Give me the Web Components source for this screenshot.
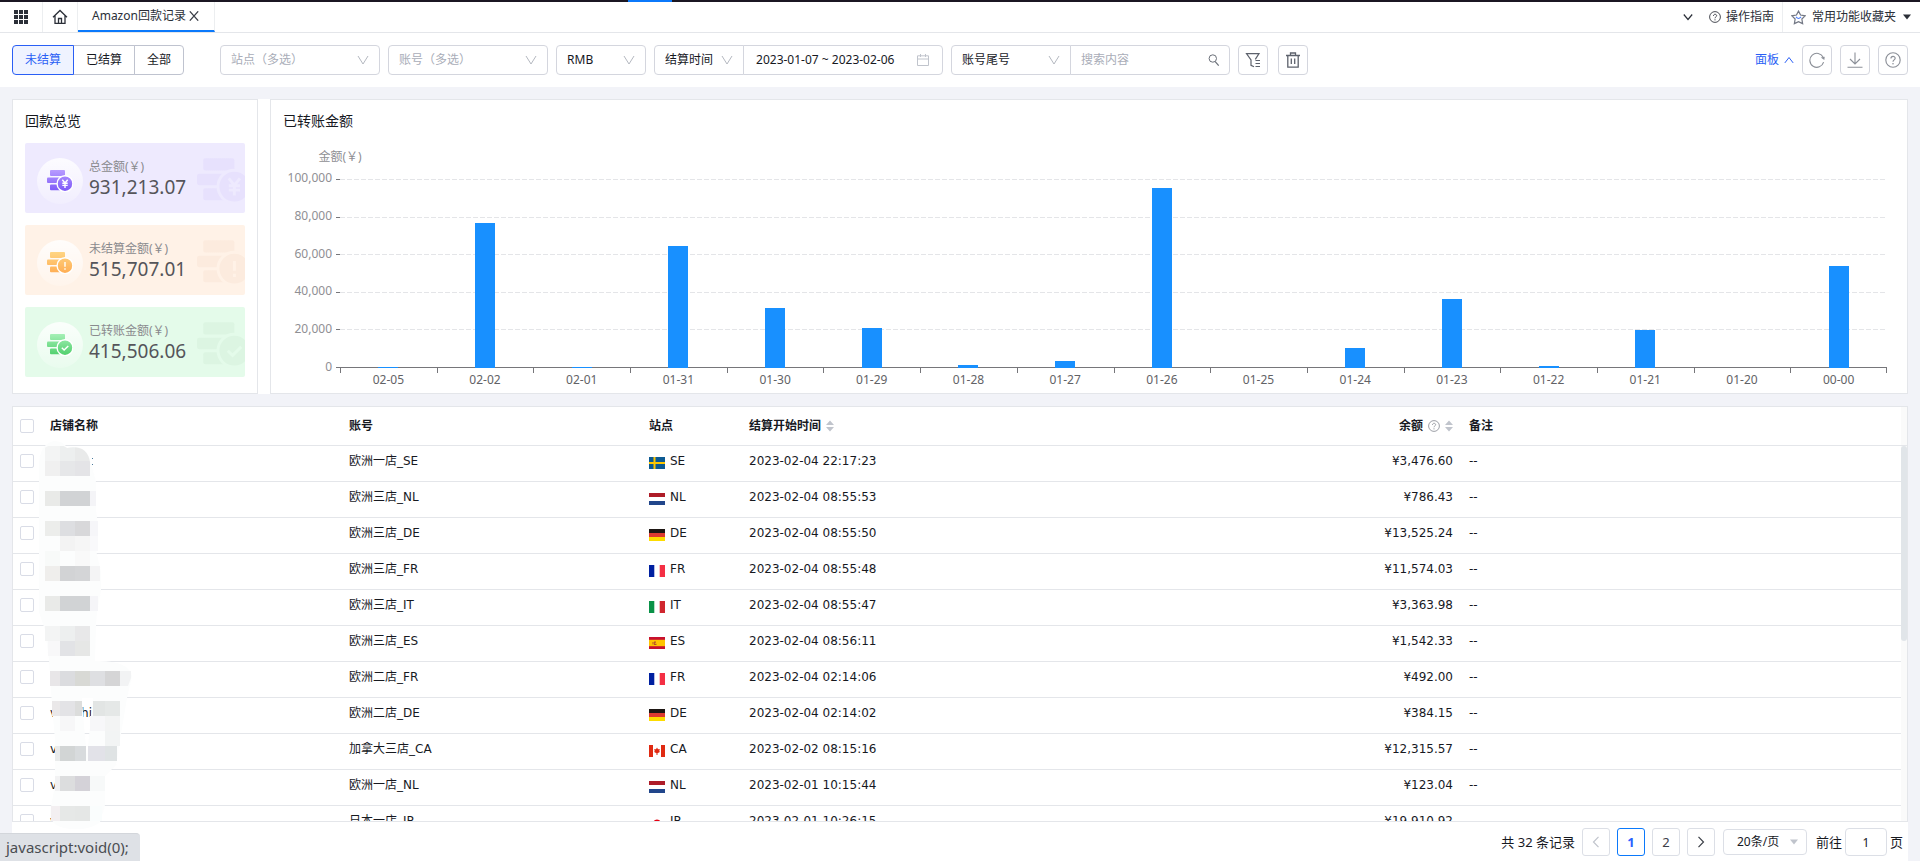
<!DOCTYPE html>
<html lang="zh-CN">
<head>
<meta charset="utf-8">
<title>Amazon回款记录</title>
<style>
html, body { margin: 0; height: 100%; }
body { font: 12px/20px "Noto Sans", "Noto Sans CJK SC", sans-serif; color: #17191f; background: #f2f3f8; }
</style>
</head>
<body>
<payout-app></payout-app>

<script>
const ICONS = {
  apps: ['0 0 14 14', '<g fill="#2b2f38"><path d="M0 0h4v4H0zM5 0h4v4H5zM10 0h4v4h-4zM0 5h4v4H0zM5 5h4v4H5zM10 5h4v4h-4zM0 10h4v4H0zM5 10h4v4H5zM10 10h4v4h-4z"/></g>'],
  home: ['0 0 16 16', '<path d="M1 8.3 8 1.5l7 6.8M3 6.8V14.400h10V6.800M6.500 14.400V9.500h3v4.900" fill="none" stroke="#2b2f38" stroke-width="1.300"/>'],
  close: ['0 0 10 10', '<path d="m.8.3 8.400 9.400M9.200.3.8 9.700" stroke="#3a3e47" stroke-width="1.200" fill="none"/>'],
  down: ['0 0 12 12', '<path d="m1 2 5 8 5-8" stroke="currentColor" fill="none"/>'],
  downsm: ['0 0 10 10', '<path d="m.8 2.500 4.200 5 4.200-5" stroke="currentColor" stroke-width="1.200" fill="none"/>'],
  up: ['0 0 12 12', '<path d="m1 9.500 5-6.500 5 6.500" stroke="currentColor" stroke-width="1.200" fill="none"/>'],
  left: ['0 0 10 12', '<path d="M7.500.8 2.500 6l5 5.200" stroke="currentColor" stroke-width="1.200" fill="none"/>'],
  right: ['0 0 10 12', '<path d="m2.500.8 5 5.200-5 5.200" stroke="currentColor" stroke-width="1.200" fill="none"/>'],
  caret: ['0 0 8 8', '<path d="M0 1.500h8L4 6.500z" fill="currentColor"/>'],
  star: ['0 0 16 16', '<path d="m8 1.200 2.200 4.200 4.800.8-3.400 3.400.8 4.900L8 12.400l-4.400 2.100.8-4.900L1 6.200l4.800-.8z" fill="none" stroke="#737885" stroke-width="1.300"/><path d="M5.300 7.300Q8 10.600 10.700 7.300" fill="none" stroke="#4a7dff" stroke-width="1.100"/>'],
  help: ['0 0 14 14', '<g fill="none" stroke="currentColor"><circle cx="7" cy="7" r="6.300"/><path d="M5.200 5.700C5.200 3.200 8.900 3.300 8.900 5.500 8.900 6.900 7 6.900 7 8.500"/></g><circle cx="7" cy="10.300" r=".7" fill="currentColor"/>'],
  calendar: ['0 0 12 12', '<path d="M.5 1.800h11v9.700H.5zM.5 5h11M3.500 0v3M8.500 0v3" fill="none" stroke="#c0c4cc"/>'],
  search: ['0 0 12 12', '<path d="m7.200 7.600 3.500 4" stroke="#6b7079" stroke-width="1.200"/><circle cx="4.800" cy="4.500" r="3.700" fill="none" stroke="#6b7079"/>'],
  filter: ['0 0 16 16', '<path d="M10.300 7.400 14 1.600H1.500L6 8v5.300l3 1.500M10.500 8.500H15M10.500 11.500H15M10.500 14.500H15" fill="none" stroke="#5d626c" stroke-width="1.200"/>'],
  trash: ['0 0 16 16', '<path d="M1 3.500h14M5.500 3.500v-2.500h5v2.500M2.800 3.500v11.700h10.400V3.500M6.300 6.500v5.500M9.700 6.500v5.500" fill="none" stroke="#5d626c" stroke-width="1.300"/>'],
  refresh: ['0 0 16 16', '<path d="M14.200 5.300A7 7 0 1 0 14.600 10.200" fill="none" stroke="#8c9098" stroke-width="1.100"/><path d="m11.800 5.600 3.900-.9-.4 3.300z" fill="#8c9098"/>'],
  download: ['0 0 16 16', '<path d="M8 .5v11.500M3 7l5 5 5-5M.5 15.200h15" fill="none" stroke="#8c9098" stroke-width="1.100"/>'],
  sort: ['0 0 8 12', '<path d="M0 5h8L4 .5zM0 7h8L4 11.500z" fill="#c0c4cc"/>']
};
const SYMBOLS = {
  yen: 'M14.800 9.500l2.700 3.300 2.700-3.300M14.800 13.100h5.400M14.800 15.200h5.400M17.500 12.800v5',
  alert: 'M17.500 9.800v4.700M17.500 16v1.500',
  check: 'M14.300 13.600l2.300 2.200 4.200-4.100'
};
const FLAGS = {
  SE: '<path fill="#0d5a92" d="M0 0h16v12H0z"/><path d="M5.500 0v12M0 6h16" stroke="#ffc800" stroke-width="2"/>',
  NL: '<path fill="#fff" d="M0 0h16v12H0z"/><path fill="#ae1c28" d="M0 0h16v4H0z"/><path fill="#21468b" d="M0 8h16v4H0z"/>',
  DE: '<path fill="#1d1613" d="M0 0h16v4H0z"/><path fill="#dd3a30" d="M0 4h16v4H0z"/><path fill="#fddc00" d="M0 8h16v4H0z"/>',
  FR: '<path fill="#fff" d="M0 0h16v12H0z"/><path fill="#0020a0" d="M0 0h5.300v12H0z"/><path fill="#f42f44" d="M10.700 0H16v12h-5.300z"/>',
  IT: '<path fill="#fff" d="M0 0h16v12H0z"/><path fill="#0a9248" d="M0 0h5.300v12H0z"/><path fill="#d0262e" d="M10.700 0H16v12h-5.300z"/>',
  ES: '<path fill="#c8102e" d="M0 0h16v12H0z"/><path fill="#ffc400" d="M0 2.800h16v6.400H0z"/><path fill="#b5502a" d="M3.500 5h1v2.500h-1zM5 4.500h2v1.200H5.800v1h1.700V8H5z"/>',
  CA: '<path fill="#fff" d="M0 0h16v12H0z"/><path fill="#e02a12" d="M0 0h4v12H0zM12 0h4v12h-4z"/><path fill="#e02a12" d="m8 2.500 1 1.700 1.800-.2-.5 2 .6.900L8.500 8.300V10h-1V8.300L5.100 6.900l.6-.9-.5-2 1.800.2z"/>',
  JP: '<path fill="#fff" d="M0 0h16v12H0z"/><circle cx="8" cy="6" r="3.600" fill="#e60012"/>'
};

/* Shared base: puts the subclass's markup and styles into an open shadow root. */
class Base extends HTMLElement {
  connectedCallback() {
    if (this.shadowRoot) return;
    const t = document.createElement('template');
    t.innerHTML = `<style>*{box-sizing:border-box}button,input,select{font:inherit;color:inherit;margin:0}${this.css()}</style>${this.html()}`;
    this.attachShadow({ mode: 'open' }).append(t.content.cloneNode(true));
  }
}

class UiIcon extends Base {
  css() { return `:host{display:inline-block;flex:none;width:var(--s,12px);height:var(--h,var(--s,12px))}svg{display:block;width:100%;height:100%}`; }
  html() { const [box, body] = ICONS[this.getAttribute('name')]; return `<svg viewBox="${box}" aria-hidden="true">${body}</svg>`; }
}

class TabStrip extends Base {
  css() { return `
    :host{display:block;background:#fff}
    .edge{height:2px;background:linear-gradient(90deg,#1b1723 0 32.700%,#0b79fb 32.700% 35%,#1b1723 35%)}
    nav{display:flex;align-items:stretch;height:31px;border-bottom:1px solid #e4e6ea;white-space:nowrap}
    button,a{display:flex;align-items:center;border:0;background:none;padding:0;text-decoration:none;color:#2b2f38}
    .sq{justify-content:center;width:43px;border-right:1px solid #eceef0}
    .home{width:35px}
    .tab{display:flex;gap:3px;padding:0 15px 0 14px;border-bottom:2px solid #0b79fb;border-right:1px solid #eceef0}
    .space{flex:1}
    .guide{gap:5px;padding:0 8px 0 16px;border-right:1px solid #eceef0}
    .fav{gap:6px;padding:0 9px 0 8px}
    .fav span{margin-right:1px}`; }
  html() { return `
    <div class="edge"></div>
    <nav>
      <button class="sq" aria-label="应用"><ui-icon name="apps" style="--s:14px"></ui-icon></button>
      <a class="sq home" href="#" aria-label="首页"><ui-icon name="home" style="--s:16px"></ui-icon></a>
      <div class="tab"><a href="#">Amazon回款记录</a><button aria-label="关闭"><ui-icon name="close" style="--s:10px"></ui-icon></button></div>
      <span class="space"></span>
      <button aria-label="更多"><ui-icon name="downsm" style="--s:10px"></ui-icon></button>
      <a class="guide" href="#"><ui-icon name="help" style="--s:12px"></ui-icon>操作指南</a>
      <button class="fav"><ui-icon name="star" style="--s:15px"></ui-icon><span>常用功能收藏夹</span><ui-icon name="caret" style="--s:8px"></ui-icon></button>
    </nav>`; }
}

/* Drop-down: width from --w, options come from the "label" attribute. */
class UiSelect extends Base {
  css() { return `
    :host{display:flex;position:relative;width:var(--w);height:30px}
    select{appearance:none;width:100%;height:100%;border:1px solid #d4d6de;border-radius:var(--r,4px);background:#fff;padding:0 24px 0 10px;outline:0}
    :host([muted]) select{color:#a9adb8}
    ui-icon{position:absolute;right:11px;top:9px;color:#b4b8c0;pointer-events:none}`; }
  html() { const l = this.getAttribute('label'); return `<select aria-label="${l}"><option>${l}</option></select><ui-icon name="down"></ui-icon>`; }
}

class FilterBar extends Base {
  css() { return `
    :host{display:flex;align-items:center;gap:8px;height:54px;padding:0 12px;background:#fff}
    .seg{display:flex;margin-right:28px}
    .seg button{height:30px;padding:0 12px;border:1px solid #bfc3cf;background:#fff;margin-left:-1px}
    .seg button:first-child{margin:0;border-radius:4px 0 0 4px}
    .seg button:last-child{border-radius:0 4px 4px 0}
    .seg .on{position:relative;color:#2a5ff5;border-color:#2a5ff5;background:#eff3ff}
    .group{display:flex}
    .group ui-select{--r:4px 0 0 4px}
    .field{display:flex;align-items:center;height:30px;border:1px solid #d4d6de;border-radius:0 4px 4px 0;margin-left:-1px;padding:0 9px 0 10px;width:160px}
    .date{width:200px;padding:0 13px 0 12px}
    input{flex:1;min-width:0;border:0;outline:0;background:none;padding:0}
    input::placeholder{color:#a9adb8}
    .sq{display:flex;align-items:center;justify-content:center;width:30px;height:30px;padding:0;border:1px solid #d4d6de;border-radius:4px;background:#fff;color:#8c9098}
    .del{margin-left:2px}
    .space{flex:1}
    .panel{display:flex;align-items:center;gap:5px;color:#2a5ff5;text-decoration:none}`; }
  html() { return `
    <div class="seg"><button class="on">未结算</button><button>已结算</button><button>全部</button></div>
    <ui-select label="站点（多选）" muted style="--w:160px"></ui-select>
    <ui-select label="账号（多选）" muted style="--w:160px"></ui-select>
    <ui-select label="RMB" style="--w:90px"></ui-select>
    <div class="group"><ui-select label="结算时间" style="--w:90px"></ui-select><label class="field date"><input aria-label="日期范围" value="2023-01-07 ~ 2023-02-06"><ui-icon name="calendar"></ui-icon></label></div>
    <div class="group"><ui-select label="账号尾号" style="--w:120px"></ui-select><label class="field"><input aria-label="搜索" placeholder="搜索内容"><ui-icon name="search"></ui-icon></label></div>
    <button class="sq" aria-label="筛选"><ui-icon name="filter" style="--s:16px"></ui-icon></button>
    <button class="sq del" aria-label="清除"><ui-icon name="trash" style="--s:16px"></ui-icon></button>
    <span class="space"></span>
    <a class="panel" href="#">面板<ui-icon name="up" style="--s:10px"></ui-icon></a>
    <button class="sq" aria-label="刷新"><ui-icon name="refresh" style="--s:16px"></ui-icon></button>
    <button class="sq" aria-label="下载"><ui-icon name="download" style="--s:16px"></ui-icon></button>
    <button class="sq" aria-label="帮助"><ui-icon name="help" style="--s:16px"></ui-icon></button>`; }
}

class UiPanel extends Base {
  css() { return `
    :host{display:flex;flex-direction:column;min-width:0;border:1px solid #e4e6ea;background:#fff;padding:12px;box-sizing:border-box}
    h2{margin:0 0 13px;font-size:14px;line-height:18px;font-weight:400}`; }
  html() { return `<h2>${this.getAttribute('heading')}</h2><slot></slot>`; }
}

class StatCard extends Base {
  css() { return `
    :host{display:flex;align-items:center;position:relative;overflow:hidden;height:70px;border-radius:2px;background:var(--bg);padding-left:12px;gap:6px;box-sizing:border-box}
    .disc{display:flex;align-items:center;justify-content:center;width:46px;height:46px;border-radius:50%;margin-top:6px;background:linear-gradient(#ffffffd9,#ffffff33)}
    .disc svg{width:26px;height:22px}
    .mark{position:absolute;left:172px;top:15px;width:54px;height:46px}
    .text{padding-bottom:2px}
    .label{color:#8a8a8e}
    .value{font-size:19px;line-height:20px;color:#55555a}
    div p{margin:0}`; }
  coins(fill, ring, sym, cls) { return `<svg class="${cls}" viewBox="0 0 26 22" aria-hidden="true"><defs><linearGradient id="g${cls}" x1="0" y1="0" x2="0" y2="22" gradientUnits="userSpaceOnUse"><stop stop-color="${fill[0]}"/><stop offset="1" stop-color="${fill[1]}"/></linearGradient></defs><g fill="url(#g${cls})"><rect x="3" width="15" height="6" rx="1"/><rect y="7.500" width="16" height="5.500" rx="1"/><rect x="3" y="14.500" width="11" height="5.800" rx="1"/><circle cx="18" cy="13.700" r="7.900" stroke="${ring}" stroke-width="1.400"/></g><path transform="translate(.5 .2)" d="${SYMBOLS[sym]}" fill="none" stroke="${ring}" stroke-width="1.400"/></svg>`; }
  html() {
    const a = n => this.getAttribute(n), mark = a('mark');
    return `<span class="disc">${this.coins([a('from'), a('to')], '#fff', a('symbol'), 'ic')}</span>
    <div class="text"><p class="label"><slot name="label"></slot></p><p class="value"><slot></slot></p></div>
    ${this.coins([mark, mark], a('bg'), a('symbol'), 'mark')}`; }
}

class BarChart extends Base {
  css() { return `
    :host{display:flex;flex-direction:column;flex:1;margin:4px 8px 0 0;color:#8f8f94}
    .unit{width:114px;text-align:center;margin-bottom:12px}
    .body{display:grid;grid-template-columns:49px 8px 1fr;grid-template-rows:1fr 25px;flex:1}
    .y,.ticks,.grid{display:flex;flex-direction:column;justify-content:space-between}
    .y{margin:-1px 0 1px}
    .y span{height:0;line-height:0;text-align:right}
    .ticks i{height:1px;background:#76767a;margin-left:4px}
    .plot{display:grid}
    .grid,.bars{grid-area:1/1}
    .grid i{height:1px;background:repeating-linear-gradient(90deg,#e4e5e8 0 5px,transparent 5px 7px)}
    .grid i:last-child{background:#76767a}
    .bars{display:flex}
    .bars div{flex:1;display:flex;align-items:flex-end;justify-content:center}
    .bars b{width:20px;background:#1890ff}
    .x{grid-column:3;display:flex;color:#626266}
    .x span{flex:1;text-align:center;padding-top:2px;background:linear-gradient(#76767a,#76767a) 0 0/1px 5px no-repeat}
    .x span:last-child{background:linear-gradient(#76767a,#76767a) 0 0/1px 5px no-repeat,linear-gradient(#76767a,#76767a) 100% 0/1px 5px no-repeat}`; }
  html() {
    const data = [['02-05', 600], ['02-02', 76700], ['02-01', 450], ['01-31', 64300], ['01-30', 31800], ['01-29', 21000], ['01-28', 1500], ['01-27', 3900], ['01-26', 95100], ['01-25', 0], ['01-24', 10800], ['01-23', 36700], ['01-22', 1000], ['01-21', 20100], ['01-20', 0], ['00-00', 54200]];
    const ticks = ['100,000', '80,000', '60,000', '40,000', '20,000', '0'];
    return `<div class="unit">金额(￥)</div><div class="body">
      <div class="y">${ticks.map(t => `<span>${t}</span>`).join('')}</div>
      <div class="ticks">${ticks.map(() => '<i></i>').join('')}</div>
      <div class="plot"><div class="grid">${ticks.map(() => '<i></i>').join('')}</div>
      <div class="bars">${data.map(d => `<div><b style="height:${d[1] / 1000}%"></b></div>`).join('')}</div></div>
      <div class="x">${data.map(d => `<span>${d[0]}</span>`).join('')}</div></div>`; }
}

/* Pixelated cover over the shop names. Each entry: y, then [x, width, colour]... */
const MOSAIC = [
  [491, [45, 15, '#e9eae8'], [60, 30, '#d1d3d5'], [90, 6, '#f4f4f7']],
  [521, [45, 15, '#ecedeb'], [60, 15, '#dddee1'], [75, 15, '#d8d8da'], [90, 8, '#f6f6f9']],
  [536, [60, 15, '#f3f3f3'], [75, 15, '#f6f6f6'], [90, 8, '#f9f9fb']],
  [551, [45, 15, '#f8faf9'], [75, 15, '#f9f9f9']],
  [566, [45, 15, '#efeeec'], [60, 15, '#d2d3d5'], [75, 15, '#d4d5d7'], [90, 10, '#f4f4f5']],
  [596, [45, 15, '#e9eae8'], [60, 30, '#d1d3d5'], [90, 8, '#f5f5f8']],
  [626, [45, 15, '#f3f4f4'], [60, 15, '#edefef'], [75, 15, '#e8e8e9']],
  [641, [48, 12, '#f8f8f9'], [60, 15, '#e2e3e6'], [75, 15, '#e6e7e6']],
  [671, [50, 10, '#e8e6e8'], [60, 15, '#dbdcdf'], [75, 15, '#d8d9d5'], [90, 15, '#dedfe2'], [105, 15, '#d5d5d6']],
  [701, [52, 8, '#eae8e9'], [60, 15, '#e3e3e6'], [75, 7, '#dcdddc'], [93, 12, '#e2e5e4'], [105, 15, '#e5e8e7']],
  [716, [60, 15, '#f7f7f8'], [90, 15, '#f7f7f9'], [105, 15, '#f3f4f4']],
  [731, [105, 15, '#f2f4f4']],
  [746, [55, 5, '#e9ebeb'], [60, 15, '#d2d5d5'], [75, 11, '#d8dbdd'], [88, 17, '#e2e2e8'], [105, 12, '#dfe3e4']],
  [776, [55, 5, '#f2f2f3'], [60, 15, '#dcddde'], [75, 15, '#d4d2d8'], [90, 15, '#f7f9f9']],
  [806, [51, 9, '#f3eff1'], [60, 15, '#e6e8e7'], [75, 15, '#e5e7e6'], [90, 12, '#fafdfd']]
];

class NameMask extends Base {
  css() { return `:host{display:block;position:absolute;left:22px;top:33px;width:100px;height:390px;pointer-events:none}svg{display:block}`; }
  html() { return `<svg width="100" height="390" viewBox="35 440 100 390" aria-hidden="true">
    <clipPath id="top"><path d="M43 480v-31q12-9 24-1 20-4 23 14v18z"/></clipPath>
    <path fill="#fcfdfd" fill-rule="evenodd" d="M39 470Q38 444 54 441 64 441 67 448 86 442 91 463L96 482V510L98 525 96 550 101 572V590L97 612 96 625 95 661Q128 660 132 676L127 698 120 740 116 765 105 776 105 805 100 822Q92 830 72 829 50 828 50 812L55 785 55 740 52 705 49 660 45 630 39 612zM82 698h11l-3 28-3 30-3-30z"/>
    <g clip-path="url(#top)"><path fill="#f3f4f4" d="M45 446h15v15H45z"/><path fill="#edefef" d="M60 446h15v15H60z"/><path fill="#e9eaea" d="M75 446h15v15H75z"/><path fill="#f0f0f0" d="M45 461h15v15H45z"/><path fill="#e6e7e9" d="M60 461h15v15H60z"/><path fill="#e4e4e7" d="M75 461h15v15H75z"/></g>
    <path fill="#4a7a9c" d="M92 458h1v1h-1zM92 464h1v1h-1z"/>
    <path fill="#f2f3f4" d="M120 671h11v7l-3 8h-8z"/>
    ${MOSAIC.map(([y, ...r]) => r.map(([x, w, c]) => `<rect x="${x}" y="${y}" width="${w}" height="15" fill="${c}"/>`).join('')).join('')}
  </svg>`; }
}

class RecordTable extends Base {
  css() { return `
    :host{display:flex;position:relative;flex:1;min-height:0;border:1px solid #e4e6ea;background:#fff;box-sizing:border-box}
    .view{flex:1;min-width:0;overflow:auto;scrollbar-width:none}
    table{width:100%;table-layout:fixed;border-collapse:separate;border-spacing:0;font-family:"DejaVu Sans","Noto Sans CJK SC",sans-serif}
    th,td{border-bottom:1px solid #e4e6ea;padding:0 8px;text-align:left;line-height:20px;white-space:nowrap}
    th{height:39px;font-weight:700}
    td{height:36px;padding-bottom:5px}
    th:first-child,td:first-child{padding-left:7px;padding-right:0}
    .num{text-align:right}
    .row{display:flex;align-items:center;gap:5px}
    .num .row{justify-content:flex-end}
    .flag{width:16px;height:12px;margin-top:3px}
    input{display:block;appearance:none;width:14px;height:14px;border:1px solid #d9dce6;border-radius:2px;background:#fff}
    .part{padding-left:24px}
    .bar{width:6px;display:flex;flex-direction:column;background:#fafafa}
    .bar i{height:39px;border-bottom:1px solid #e4e6ea}
    .bar div{flex:1}
    .bar b{display:block;height:52%;border-radius:4px;background:#e1e5e9}
    ui-icon{color:#8c9098}`; }
  html() {
    const rows = [
      ['', '欧洲一店_SE', 'SE', '2023-02-04 22:17:23', '¥3,476.60'], ['', '欧洲三店_NL', 'NL', '2023-02-04 08:55:53', '¥786.43'],
      ['', '欧洲三店_DE', 'DE', '2023-02-04 08:55:50', '¥13,525.24'], ['', '欧洲三店_FR', 'FR', '2023-02-04 08:55:48', '¥11,574.03'],
      ['', '欧洲三店_IT', 'IT', '2023-02-04 08:55:47', '¥3,363.98'], ['', '欧洲三店_ES', 'ES', '2023-02-04 08:56:11', '¥1,542.33'],
      ['', '欧洲二店_FR', 'FR', '2023-02-04 02:14:06', '¥492.00'], ['v<span class="part">hin</span>', '欧洲二店_DE', 'DE', '2023-02-04 02:14:02', '¥384.15'],
      ['v', '加拿大三店_CA', 'CA', '2023-02-02 08:15:16', '¥12,315.57'], ['v', '欧洲一店_NL', 'NL', '2023-02-01 10:15:44', '¥123.04'],
      ['v', '日本一店_JP', 'JP', '2023-02-01 10:26:15', '¥19,910.92']];
    return `<div class="view"><table>
      <colgroup><col style="width:29px"><col style="width:299px"><col style="width:300px"><col style="width:100px"><col style="width:360px"><col style="width:360px"><col style="width:440px"></colgroup>
      <thead><tr><th><input type="checkbox" aria-label="全选"></th><th>店铺名称</th><th>账号</th><th>站点</th>
        <th><div class="row">结算开始时间<ui-icon name="sort" style="--s:8px;--h:12px"></ui-icon></div></th>
        <th class="num"><div class="row">余额<ui-icon name="help"></ui-icon><ui-icon name="sort" style="--s:8px;--h:12px"></ui-icon></div></th><th>备注</th></tr></thead>
      <tbody>${rows.map((r, i) => `<tr><td><input type="checkbox" aria-label="选择第${i + 1}行"></td><td>${r[0]}</td><td>${r[1]}</td>
        <td><div class="row"><svg class="flag" viewBox="0 0 16 12" aria-hidden="true">${FLAGS[r[2]]}</svg>${r[2]}</div></td><td>${r[3]}</td><td class="num">${r[4]}</td><td>--</td></tr>`).join('')}</tbody>
    </table></div>
    <div class="bar"><i></i><div><b></b></div></div>
    <name-mask></name-mask>`; }
}

class PageNav extends Base {
  css() { return `
    :host{display:flex;align-items:center;justify-content:flex-end;gap:7px;padding:6px 5px 5px;background:#fff;font-size:13px}
    button{display:flex;align-items:center;justify-content:center;width:28px;height:28px;padding:0;border:1px solid #dcdfe6;border-radius:3px;background:#fff;color:#3c4048}
    .on{border-color:#0b79fb;color:#2a62ff;font-weight:700}
    .off{color:#c0c4cc}
    .size{position:relative;display:flex;margin:0 2px 0 1px;font-size:12px}
    select{appearance:none;width:84px;height:26px;border:1px solid #dcdfe6;border-radius:4px;background:#fff;padding:0 24px 0 13px;outline:0}
    .size ui-icon{position:absolute;right:9px;top:9px;color:#c0c4cc;pointer-events:none}
    label{display:flex;align-items:center;gap:3px}
    input{width:42px;height:28px;border:1px solid #dcdfe6;border-radius:4px;text-align:center;padding:0;font-size:12px}`; }
  html() { return `<span>共 32 条记录</span>
    <button class="off" aria-label="上一页"><ui-icon name="left" style="--s:10px;--h:12px"></ui-icon></button>
    <button class="on">1</button><button>2</button>
    <button aria-label="下一页"><ui-icon name="right" style="--s:10px;--h:12px"></ui-icon></button>
    <span class="size"><select aria-label="每页条数"><option>20条/页</option></select><ui-icon name="caret" style="--s:8px"></ui-icon></span>
    <label>前往<input value="1">页</label>`; }
}

class StatusTip extends Base {
  css() { return `:host{position:fixed;left:0;bottom:0;background:#dee1e6;color:#4a4d52;border-radius:0 4px 0 0;padding:3px 11px 4px 6px;font-size:15px;line-height:20px;border-top:1px solid #d3d6db;box-sizing:border-box;height:28px}`; }
  html() { return `<slot></slot>`; }
}

class PayoutApp extends Base {
  css() { return `
    :host{display:flex;flex-direction:column;height:100vh}
    main{display:flex;flex-direction:column;flex:1;min-height:0;padding:12px 12px 0}
    .top{display:grid;grid-template-columns:246px 1fr;gap:12px;background:#fff;margin-bottom:12px}
    .overview{padding-bottom:16px}
    .trend{padding-bottom:0}
    .cards{display:grid;gap:12px}`; }
  html() { return `
    <tab-strip></tab-strip>
    <filter-bar></filter-bar>
    <main>
      <section class="top">
        <ui-panel class="overview" heading="回款总览"><div class="cards">
          <stat-card style="--bg:#eeeafe" bg="#eeeafe" mark="#e7e1fd" from="#b89cff" to="#7a55f7" symbol="yen"><span slot="label">总金额(￥)</span>931,213.07</stat-card>
          <stat-card style="--bg:#fff2e7" bg="#fff2e7" mark="#fcebde" from="#ffd583" to="#ffac52" symbol="alert"><span slot="label">未结算金额(￥)</span>515,707.01</stat-card>
          <stat-card style="--bg:#e4fbea" bg="#e4fbea" mark="#dcf5e2" from="#a5f0b6" to="#4dce6a" symbol="check"><span slot="label">已转账金额(￥)</span>415,506.06</stat-card>
        </div></ui-panel>
        <ui-panel class="trend" heading="已转账金额"><bar-chart></bar-chart></ui-panel>
      </section>
      <record-table></record-table>
      <page-nav></page-nav>
    </main>
    <status-tip>javascript:void(0);</status-tip>`; }
}

Object.entries({ 'ui-icon': UiIcon, 'ui-select': UiSelect, 'ui-panel': UiPanel, 'tab-strip': TabStrip, 'filter-bar': FilterBar, 'stat-card': StatCard, 'bar-chart': BarChart, 'name-mask': NameMask, 'record-table': RecordTable, 'page-nav': PageNav, 'status-tip': StatusTip, 'payout-app': PayoutApp })
  .forEach(([n, c]) => customElements.define(n, c));
</script>
</body>
</html>
